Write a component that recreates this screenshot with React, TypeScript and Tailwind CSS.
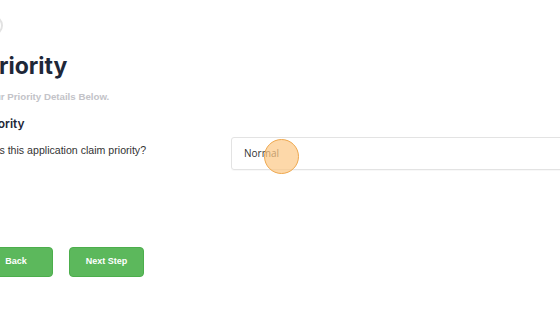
import React from 'react';

const App: React.FC = () => {
  return (
    <div className="w-[560px] h-[315px] bg-white overflow-hidden relative" style={{ fontFamily: '"Liberation Sans", Arial, sans-serif' }}>
      <div className="absolute left-[-18px] top-[15px] w-[21px] h-[21px] rounded-full border-[2px] border-[#e2e2e2]" />
      <div className="pt-[49px] flex flex-col">
        <h1 className="ml-[-16px] text-[23px] leading-[34px] font-bold text-[#1e2738]" style={{ fontFamily: 'Inter, sans-serif' }}>
          Priority
        </h1>
        <p className="ml-[-44px] mt-[8px] text-[9.7px] leading-[12px] font-bold text-[#c3c3c8]">
          Enter Your Priority Details Below.
        </p>
        <h2 className="ml-[-18px] mt-[13px] text-[12px] leading-[16px] font-semibold text-[#1e2738]" style={{ fontFamily: 'Inter, sans-serif' }}>
          Priority
        </h2>
        <div className="flex items-start mt-[5px] mr-[-40px]">
          <div className="w-[231px] shrink-0 ml-[-20px] pt-[6px] text-[10.6px] leading-[14px] text-[#333]">
            Does this application claim priority?
          </div>
          <div className="relative ml-[20px] flex-1 h-[33px] border border-[#e3e3e3] rounded-[3px] flex items-center pl-[12px] text-[10px] text-[#333] shadow-[0_1px_1px_rgba(0,0,0,0.03)]" style={{ fontFamily: '"Open Sans", sans-serif' }}>
            Normal
            <div className="absolute left-[32px] top-[1px] w-[35px] h-[35px] rounded-full bg-[#fcc884]/70 border border-[#eea84f]" />
          </div>
        </div>
        <div className="flex gap-[16px] mt-[77px] ml-[-21px]">
          <button className="w-[74px] h-[30px] rounded-[4px] bg-[#5cb85c] border border-[#4cae4c] text-white text-[9px] font-bold">
            Back
          </button>
          <button className="w-[75px] h-[30px] rounded-[4px] bg-[#5cb85c] border border-[#4cae4c] text-white text-[9px] font-bold">
            Next Step
          </button>
        </div>
      </div>
    </div>
  );
};

export default App;
